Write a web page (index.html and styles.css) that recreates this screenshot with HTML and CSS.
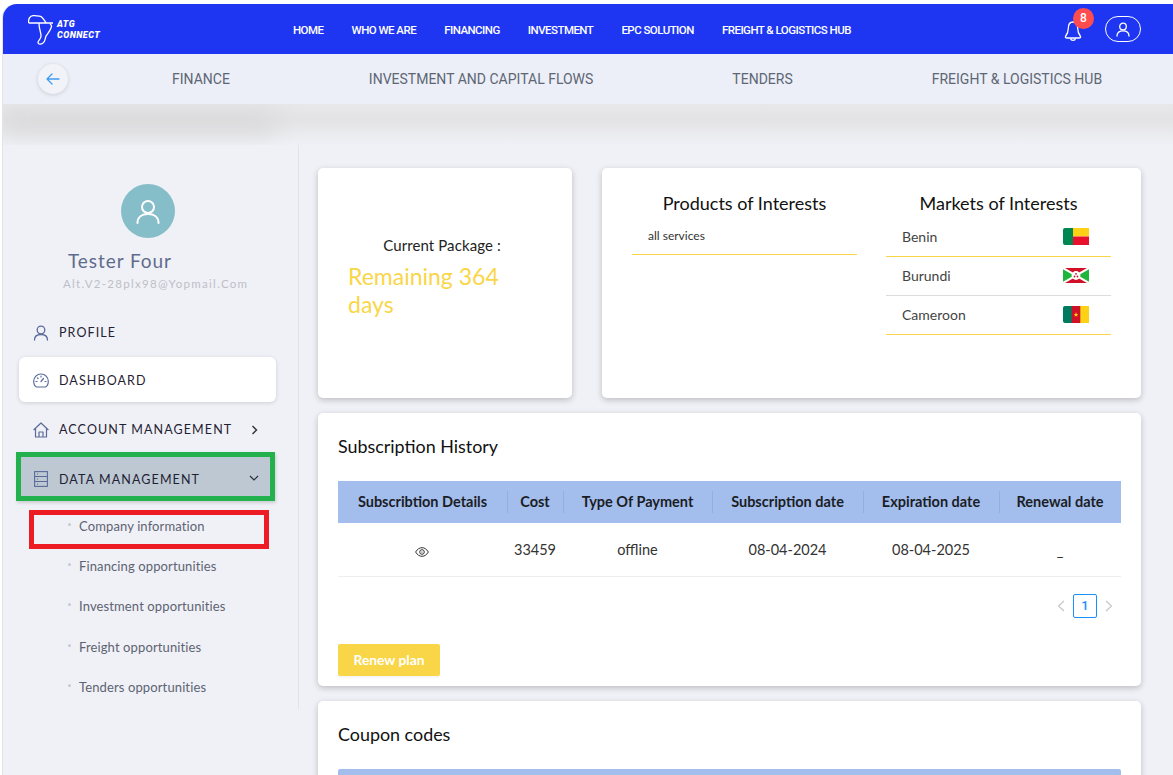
FILE: index.html
```html
<!DOCTYPE html>
<html lang="en">
<head>
<meta charset="utf-8">
<title>ATG Connect</title>
<link rel="stylesheet" href="styles.css">
</head>
<body>
<div class="frame">
  <header class="topbar">
    <div class="logo">
      <svg class="logo-map" width="27" height="32" viewBox="0 0 27 32" fill="none" stroke="#fff" stroke-width="1.3">
        <path d="M.7 8 C0 4 2 1 5 .7 C8 .4 10 1 13 1.5 C15 3 16 5 18 7.6 M.7 8 H25 M22 9 C24 10 24 11 23 13 C22 16 20 18 18 21 C17 24 17 27 15 28 C13 29.5 10 29.5 10 27.5 C10 25.5 13 24.5 13 21 C13 17 11 14 11 8.5"/>
      </svg>
      <div class="logo-text">ATG<br>CONNECT</div>
    </div>
    <nav class="mainnav">
      <a>HOME</a><a>WHO WE ARE</a><a>FINANCING</a><a>INVESTMENT</a><a>EPC SOLUTION</a><a>FREIGHT &amp; LOGISTICS HUB</a>
    </nav>
    <div class="top-actions">
      <div class="bell">
        <svg width="18" height="22" viewBox="0 0 18 22" fill="none" stroke="#fff" stroke-width="1.3" stroke-linejoin="round">
          <path d="M9 2 C5.5 2 4.3 5 4.3 8.5 C4.3 12 3.3 14 1.5 16.5 Q1 18 3 18 L15 18 Q17 18 16.5 16.5 C14.7 14 13.7 12 13.7 8.5 C13.7 5 12.5 2 9 2 Z"/>
          <path d="M6.5 18.5 C7 21 11 21 11.5 18.5"/>
        </svg>
        <span class="badge">8</span>
      </div>
      <div class="user-pill">
        <svg width="14" height="15" viewBox="0 0 14 15" fill="none" stroke="#fff" stroke-width="1.3" stroke-linecap="round">
          <circle cx="7" cy="4.5" r="3.3"/><path d="M1 14 C1 10.5 3.5 8.8 7 8.8 C10.5 8.8 13 10.5 13 14"/>
        </svg>
      </div>
    </div>
  </header>

  <div class="subbar">
    <div class="back">
      <svg width="14" height="12" viewBox="0 0 14 12" fill="none" stroke="#3f9cf3" stroke-width="1.3" stroke-linecap="round" stroke-linejoin="round"><path d="M13 6 H1 M6 1 L1 6 L6 11"/></svg>
    </div>
    <a class="sub-finance">FINANCE</a>
    <a class="sub-invest">INVESTMENT AND CAPITAL FLOWS</a>
    <a class="sub-tenders">TENDERS</a>
    <a class="sub-freight">FREIGHT &amp; LOGISTICS HUB</a>
  </div>

  <div class="blur-band"><div class="blur-shape"></div></div>

  <div class="layout">
    <aside class="sidebar">
      <div class="avatar">
        <svg width="24" height="25" viewBox="0 0 24 25" fill="none" stroke="#fff" stroke-width="2" stroke-linecap="round">
          <circle cx="12" cy="8" r="6"/><path d="M1.5 24 C1.5 18 6 15 12 15 C18 15 22.5 18 22.5 24"/>
        </svg>
      </div>
      <div class="user-name">Tester Four</div>
      <div class="user-mail">Alt.V2-28plx98@Yopmail.Com</div>

      <div class="menu">
        <div class="menu-item">
          <svg class="mi" width="16" height="16" viewBox="0 0 16 16" fill="none" stroke="#5a6b9a" stroke-width="1.3" stroke-linecap="round"><circle cx="8" cy="5" r="3.8"/><path d="M1.5 15 C1.5 11.5 4 9.5 8 9.5 C12 9.5 14.5 11.5 14.5 15"/></svg>
          <span>PROFILE</span>
        </div>
        <div class="menu-item active-white">
          <svg class="mi" width="16" height="16" viewBox="0 0 16 16" fill="none" stroke="#5a6b9a" stroke-width="1.2" stroke-linecap="round"><path d="M3.5 14 C1.5 13 .7 10.5 .7 8.3 C.7 4.2 4 1 8 1 C12 1 15.3 4.2 15.3 8.3 C15.3 10.5 14.5 13 12.5 14 Z"/><path d="M8 8.5 L10.5 5.5 M3 8.5 H4 M12 8.5 H13 M4.5 5 L5 5.5 M8 3.2 V4"/></svg>
          <span>DASHBOARD</span>
        </div>
        <div class="menu-item">
          <svg class="mi" width="16" height="16" viewBox="0 0 16 16" fill="none" stroke="#5a6b9a" stroke-width="1.2" stroke-linejoin="round"><path d="M.6 8 L8 1 L15.4 8 M2.5 6.5 V15 H13.5 V6.5 M6 15 V10 H10 V15"/></svg>
          <span>ACCOUNT MANAGEMENT</span>
          <svg class="chev-r" width="7" height="10" viewBox="0 0 7 10" fill="none" stroke="#2a2f3a" stroke-width="1.4"><path d="M1.5 1 L5.5 5 L1.5 9"/></svg>
        </div>
        <div class="menu-item data-mgmt">
          <svg class="mi" width="14" height="16" viewBox="0 0 14 16" fill="none" stroke="#5a6b9a" stroke-width="1.1"><rect x=".6" y=".6" width="12.8" height="14.8"/><path d="M.6 5.5 H13.4 M.6 10.5 H13.4 M3 3 H4 M3 8 H4 M3 13 H4"/></svg>
          <span>DATA MANAGEMENT</span>
          <svg class="chev-d" width="10" height="7" viewBox="0 0 10 7" fill="none" stroke="#2a2f3a" stroke-width="1.2"><path d="M1 1 L5 5 L9 1"/></svg>
        </div>
      </div>

      <ul class="submenu">
        <li class="highlight">Company information</li>
        <li>Financing opportunities</li>
        <li>Investment opportunities</li>
        <li>Freight opportunities</li>
        <li>Tenders opportunities</li>
      </ul>
    </aside>

    <main class="content">
      <div class="row-top">
        <section class="card package">
          <div class="pkg-label">Current Package :</div>
          <div class="pkg-days">Remaining 364 days</div>
        </section>
        <section class="card interests">
          <div class="col-products">
            <h3>Products of Interests</h3>
            <div class="prod-row">all services</div>
          </div>
          <div class="col-markets">
            <h3>Markets of Interests</h3>
            <div class="market"><span>Benin</span>
              <svg class="flag" width="26" height="17" viewBox="0 0 26 17"><rect x="8" width="18" height="8.5" fill="#fcd116"/><rect x="8" y="8.5" width="18" height="8.5" fill="#e8112d"/><path d="M2 0 H10 V17 H2 Q0 17 0 15 V2 Q0 0 2 0 Z" fill="#008751"/></svg>
            </div>
            <div class="market"><span>Burundi</span>
              <svg class="flag" width="26" height="15" viewBox="0 0 26 15"><rect width="26" height="15" fill="#ce1126"/><path d="M0 0 L13 7.5 L0 15 Z M26 0 L13 7.5 L26 15 Z" fill="#1eb53a"/><path d="M0 0 L26 15 M26 0 L0 15" stroke="#fff" stroke-width="2"/><circle cx="13" cy="7.5" r="4.4" fill="#fff"/><circle cx="13" cy="5.8" r=".9" fill="#ce1126"/><circle cx="11.5" cy="8.5" r=".9" fill="#ce1126"/><circle cx="14.5" cy="8.5" r=".9" fill="#ce1126"/></svg>
            </div>
            <div class="market"><span>Cameroon</span>
              <svg class="flag" width="26" height="17" viewBox="0 0 26 17"><rect x="17" width="9" height="17" fill="#fcd116"/><path d="M2 0 H9 V17 H2 Q0 17 0 15 V2 Q0 0 2 0 Z" fill="#007a5e"/><rect x="8.7" width="8.6" height="17" fill="#ce1126"/><path d="M13 6.3 L13.7 8 L15.3 8 L14 9.1 L14.5 10.7 L13 9.7 L11.5 10.7 L12 9.1 L10.7 8 L12.3 8 Z" fill="#fcd116"/></svg>
            </div>
          </div>
        </section>
      </div>

      <section class="card history">
        <h2>Subscription History</h2>
        <table class="tbl">
          <thead>
            <tr>
              <th class="c1"><span>Subscribtion Details</span></th>
              <th class="c2"><span>Cost</span></th>
              <th class="c3"><span>Type Of Payment</span></th>
              <th class="c4"><span>Subscription date</span></th>
              <th class="c5"><span>Expiration date</span></th>
              <th class="c6"><span>Renewal date</span></th>
            </tr>
          </thead>
          <tbody>
            <tr>
              <td><svg class="eye" width="14" height="10" viewBox="0 0 14 10" fill="none" stroke="#333" stroke-width="1"><path d="M.6 5 C2.5 2 4.5 .7 7 .7 C9.5 .7 11.5 2 13.4 5 C11.5 8 9.5 9.3 7 9.3 C4.5 9.3 2.5 8 .6 5 Z"/><circle cx="7" cy="5" r="2.3"/><circle cx="7" cy="5" r=".6" fill="#333" stroke="none"/></svg></td>
              <td>33459</td>
              <td>offline</td>
              <td>08-04-2024</td>
              <td>08-04-2025</td>
              <td class="dash">_</td>
            </tr>
          </tbody>
        </table>
        <div class="pager">
          <svg width="8" height="12" viewBox="0 0 8 12" fill="none" stroke="#c4c4c4" stroke-width="1.1"><path d="M7 1 L1.5 6 L7 11"/></svg>
          <span class="page-num">1</span>
          <svg width="8" height="12" viewBox="0 0 8 12" fill="none" stroke="#c4c4c4" stroke-width="1.1"><path d="M1 1 L6.5 6 L1 11"/></svg>
        </div>
        <button class="renew">Renew plan</button>
      </section>

      <section class="card coupons">
        <h2>Coupon codes</h2>
        <div class="coupon-head"></div>
      </section>
    </main>
  </div>
</div>
</body>
</html>
```

FILE: styles.css
```css
* { box-sizing: border-box; }
html, body { margin: 0; height: 775px; overflow: hidden; background: #fff; }
body { font-family: "Lato", "Liberation Sans", sans-serif; color: #222; }

.frame {
  height: 771px;
  margin: 4px 0 0 3px;
  background: #f0f1f6;
  border-top-left-radius: 14px;
  overflow: hidden;
  display: flex;
  flex-direction: column;
  box-shadow: -1px 0 0 #e4e4e8;
}

.topbar {
  height: 50px;
  background: #1e36f2;
  display: flex;
  align-items: center;
  flex: none;
}
.logo { display: flex; align-items: center; width: 290px; padding-left: 25px; gap: 2px; flex: none; }
.logo-map { margin-top: 3px; }
.logo-text { color: #fff; font: italic 900 9px/10.5px "Roboto", sans-serif; letter-spacing: .45px; padding-top: 1px; }
.mainnav { display: flex; gap: 28.1px; font: 500 11.5px "Roboto", sans-serif; letter-spacing: -.54px; color: #fff; flex: none; padding-top: 2px; }
.top-actions { margin-left: auto; display: flex; align-items: center; padding-right: 32px; gap: 23px; }
.bell { position: relative; width: 18px; height: 22px; margin-top: 3px; }
.bell svg { display: block; }
.badge {
  position: absolute; left: 9px; top: -12px;
  width: 21px; height: 21px; border-radius: 50%;
  background: #ff4d4f; color: #fff;
  font: 500 12px/21px "Roboto", sans-serif; text-align: center;
}
.user-pill {
  width: 36px; height: 26px; border: 1px solid #fff; border-radius: 13px;
  display: flex; align-items: center; justify-content: center;
}

.subbar {
  height: 50px; flex: none;
  background: #eceff8;
  display: flex; align-items: center;
  font: 400 14px "Roboto", sans-serif; color: #5d6673;
  padding-left: 35px;
}
.back {
  width: 30px; height: 30px; border-radius: 50%; background: #f1f3f9;
  box-shadow: 0 1px 4px rgba(0,0,0,.14);
  display: flex; align-items: center; justify-content: center; flex: none;
}
.sub-finance { margin-left: 104px; }
.sub-invest { margin-left: 139px; }
.sub-tenders { margin-left: 139px; }
.sub-freight { margin-left: 139px; }

.blur-band {
  height: 41px; flex: none; overflow: hidden;
  background: linear-gradient(#e8e8ea, #e3e3e5 40%, #edeef2 85%, #f0f1f6);
}
.blur-shape {
  height: 24px; margin-top: 6px; width: 272px;
  background: #dadadc; filter: blur(11px);
}

.layout { display: flex; flex: 1; min-height: 0; }

.sidebar {
  width: 296px; flex: none; height: 564px;
  border-right: 1px solid #dfe3ee;
  padding: 39px 0 0 16px;
}
.avatar {
  width: 54px; height: 54px; border-radius: 50%; background: #85bdc9;
  margin-left: 102px;
  display: flex; align-items: center; justify-content: center;
}
.user-name { margin: 11px 0 0 49px; font-size: 19px; line-height: 24px; letter-spacing: .95px; color: #5f6b8c; }
.user-mail { margin: 4px 0 0 44px; font-size: 11.5px; line-height: 14px; letter-spacing: 1.3px; color: #bcc0c8; white-space: nowrap; }

.menu { margin-top: 18px; width: 257px; }
.menu-item {
  height: 45px; display: flex; align-items: center;
  font-size: 12.5px; letter-spacing: 1.1px; color: #1f2233;
  padding: 2px 0 0 14px; position: relative;
}
.mi { flex: none; margin-right: 10px; }
.active-white { margin-top: 3px; background: #fff; border-radius: 6px; box-shadow: 0 1px 4px rgba(0,0,0,.14); }
.active-white + .menu-item { margin-top: 4px; }
.chev-r { position: absolute; left: 232px; top: 19px; }
.chev-d { position: absolute; left: 231px; top: 21px; }
.data-mgmt {
  height: 49px; margin: 1px 0 0 -3px; width: 259px;
  background: #bdc8d3; border: 5px solid #22b14c;
  padding: 5px 0 0 12px;
  box-shadow: 1px 2px 3px rgba(0,0,0,.15);
}
.data-mgmt .mi { margin-left: 1px; margin-right: 11px; }
.data-mgmt .chev-d { left: 228px; top: 18px; }

.submenu { list-style: none; margin: 0; padding: 0 0 0 43px; font-size: 13px; color: #5d6373; }
.submenu li { height: 40.3px; line-height: 40px; padding-left: 17px; position: relative; letter-spacing: .12px; white-space: nowrap; }
.submenu li::before {
  content: ""; position: absolute; left: 6px; top: 17px;
  width: 3px; height: 3px; border-radius: 50%; background: #c8cbd2;
}
.submenu .highlight { margin-top: 9px; height: 36.2px; line-height: 33px; }
.submenu .highlight::before { top: 13px; }
.submenu .highlight::after {
  content: ""; position: absolute; left: -33px; top: 0;
  box-sizing: border-box;
  width: 240px; height: 39px; border: 5px solid #ed1c24;
}

.content { flex: 1; padding: 23px 32px 0 19px; min-width: 0; }
.card { background: #fff; border-radius: 5px; box-shadow: 0 2px 6px rgba(0,0,0,.22); }
.row-top { display: flex; gap: 30px; }
.package { width: 254px; height: 230px; padding: 68px 30px 0; }
.pkg-label { font-size: 15px; letter-spacing: .1px; text-align: center; margin-right: 6px; color: #222; line-height: 18px; }
.pkg-days { margin-top: 8px; font-size: 23px; line-height: 28px; color: #f9d648; }
.interests { flex: 1; display: flex; padding: 0 30px; }
.col-products { width: 225px; }
.col-markets { width: 225px; margin-left: 29px; }
.interests h3 { margin: 23px 0 0; font-size: 18px; line-height: 24px; font-weight: 400; text-align: center; color: #111; }
.prod-row { margin-top: 14px; padding-left: 16px; font-size: 12px; height: 26px; border-bottom: 1px solid #f9d648; line-height: 14px; color: #333; }
.market { height: 39px; display: flex; align-items: center; justify-content: space-between; padding: 0 22px 1px 16px; border-bottom: 1px solid #f9d648; font-size: 14px; color: #444; }
.market:nth-child(3) { border-color: #ddd; }
.col-markets h3 + .market { height: 42px; padding: 1px 22px 0 16px; }
.flag { display: block; }

.history { margin-top: 15px; height: 273px; padding: 21px 20px 0; position: relative; }
.history h2, .coupons h2 { margin: 0; font-size: 17.9px; line-height: 24px; font-weight: 400; color: #111; }
.tbl { width: 783px; margin-top: 23px; border-collapse: collapse; table-layout: fixed; font-size: 14.5px; }
.tbl th { background: #a3bdec; height: 42px; padding: 0 0 2px; font-weight: 700; font-size: 14.5px; color: #1b1d26; position: relative; }
.tbl th + th::before { content: ""; position: absolute; left: 0; top: 10px; bottom: 10px; width: 1px; background: #93aedf; }
.tbl td { height: 53px; text-align: center; border-bottom: 1px solid #eee; color: #333; padding: 0; }
.c1 { width: 169px; } .c2 { width: 56px; } .c3 { width: 149px; } .c4 { width: 151px; } .c5 { width: 136px; } .c6 { width: 122px; }
.eye { display: block; margin: 5px auto 0; position: relative; left: -1px; }
.tbl .dash { padding-top: 2px; }
.pager { display: flex; justify-content: flex-end; align-items: center; gap: 8px; margin-top: 17px; padding-right: 8px; }
.page-num {
  width: 24px; height: 24px; border: 1px solid #1890ff; border-radius: 2px;
  font: 500 13px/22px "Roboto", sans-serif; color: #1890ff; text-align: center;
}
.renew {
  display: block; margin-top: 26px; width: 102px; height: 32px;
  background: #f9d648; color: #fff; border: 0; border-radius: 2px;
  font: 700 13.8px "Lato", sans-serif; padding: 0;
  box-shadow: 0 2px 0 rgba(0,0,0,.03);
}
.coupons { margin-top: 15px; height: 200px; padding: 21px 20px 0; }
.coupon-head { margin-top: 23px; height: 42px; background: #a3bdec; border-radius: 2px 2px 0 0; }
```
